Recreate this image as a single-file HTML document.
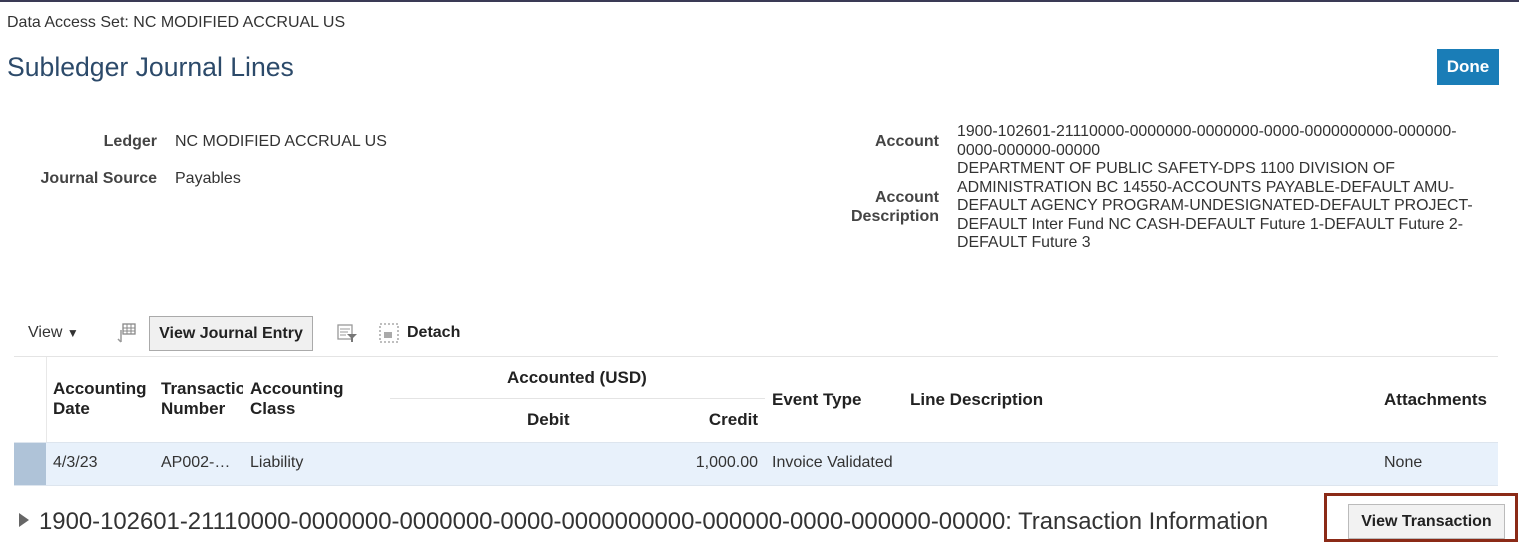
<!DOCTYPE html>
<html><head><style>
*{margin:0;padding:0;box-sizing:border-box}
body{width:1519px;height:554px;position:relative;background:#fff;font-family:"Liberation Sans",sans-serif;color:#333;overflow:hidden}
.a{position:absolute;white-space:nowrap}
.b{font-weight:bold}
.lab{font-size:16px;font-weight:bold;color:#444;text-align:right}
.v{font-size:16px;color:#333}
.h{font-size:17px;color:#222;font-weight:bold}
</style></head><body>
<div class="a" style="left:0;top:0;width:1519px;height:2px;background:#3a3a55"></div>
<div class="a" style="left:7px;top:14px;font-size:16px;color:#333">Data Access Set: NC MODIFIED ACCRUAL US</div>
<div class="a" style="left:7px;top:52px;font-size:26.6px;color:#2c4a6a">Subledger Journal Lines</div>
<div class="a b" style="left:1437px;top:49px;width:62px;height:36px;background:#1a7db7;color:#fff;font-size:17px;line-height:36px;text-align:center">Done</div>

<div class="a lab" style="right:1362px;top:133px">Ledger</div>
<div class="a v" style="left:175px;top:133px">NC MODIFIED ACCRUAL US</div>
<div class="a lab" style="right:1362px;top:170px">Journal Source</div>
<div class="a v" style="left:175px;top:170px">Payables</div>

<div class="a lab" style="right:580px;top:133px">Account</div>
<div class="a lab" style="right:580px;top:188px;line-height:19px">Account<br>Description</div>
<div class="a v" style="left:957px;top:123px;line-height:18.5px;font-size:15.9px">1900-102601-21110000-0000000-0000000-0000-0000000000-000000-<br>0000-000000-00000<br>DEPARTMENT OF PUBLIC SAFETY-DPS 1100 DIVISION OF<br>ADMINISTRATION BC 14550-ACCOUNTS PAYABLE-DEFAULT AMU-<br>DEFAULT AGENCY PROGRAM-UNDESIGNATED-DEFAULT PROJECT-<br>DEFAULT Inter Fund NC CASH-DEFAULT Future 1-DEFAULT Future 2-<br>DEFAULT Future 3</div>

<div class="a v" style="left:28px;top:324px;font-size:16px">View <span style="font-size:12px">▼</span></div>
<svg class="a" style="left:115px;top:322px" width="22" height="22" viewBox="0 0 22 22"><rect x="8" y="2" width="12" height="10" fill="none" stroke="#888" stroke-width="1.3"/><path d="M8 6h12M8 9h12M12 2v10M16 2v10" stroke="#888" stroke-width="1"/><path d="M6 8v12M6 20l-3-3" stroke="#999" stroke-width="1.5" fill="none"/></svg>
<div class="a b" style="left:149px;top:316px;width:164px;height:35px;border:1px solid #aaa;background:#f0f0f0;font-size:16px;line-height:33px;text-align:center;color:#222">View Journal Entry</div>
<svg class="a" style="left:336px;top:322px" width="22" height="22" viewBox="0 0 22 22"><rect x="2" y="3" width="14" height="14" fill="none" stroke="#999" stroke-width="1.3"/><path d="M4 7h10M4 10h8M4 13h6" stroke="#999"/><path d="M11 12h10l-4 4v4h-2v-4z" fill="#777"/></svg>
<svg class="a" style="left:378px;top:322px" width="22" height="22" viewBox="0 0 22 22"><rect x="2" y="2" width="18" height="18" fill="none" stroke="#999" stroke-width="1.3" stroke-dasharray="2 2"/><rect x="6" y="10" width="8" height="6" fill="#aaa"/></svg>
<div class="a b" style="left:407px;top:324px;font-size:16px;color:#222">Detach</div>

<div class="a" style="left:14px;top:356px;width:1484px;height:1px;background:#e4e4e4"></div>
<div class="a" style="left:46px;top:357px;width:1px;height:85px;background:#e8e8e8"></div>
<div class="a" style="left:14px;top:442px;width:1484px;height:44px;background:#e8f1fb;border-top:1px solid #dde5ee;border-bottom:1px solid #dde5ee"></div>
<div class="a" style="left:14px;top:443px;width:32px;height:42px;background:#afc3d8"></div>
<div class="a" style="left:390px;top:398px;width:375px;height:1px;background:#e4e4e4"></div>

<div class="a h" style="left:53px;top:379px;line-height:20px">Accounting<br>Date</div>
<div class="a h" style="left:161px;top:379px;line-height:20px;width:82px;overflow:hidden">Transaction<br>Number</div>
<div class="a h" style="left:250px;top:379px;line-height:20px">Accounting<br>Class</div>
<div class="a h" style="left:507px;top:368px">Accounted (USD)</div>
<div class="a h" style="left:527px;top:410px">Debit</div>
<div class="a h" style="right:761px;top:410px">Credit</div>
<div class="a h" style="left:772px;top:390px">Event Type</div>
<div class="a h" style="left:910px;top:390px">Line Description</div>
<div class="a h" style="left:1384px;top:390px">Attachments</div>

<div class="a v" style="left:53px;top:454px">4/3/23</div>
<div class="a v" style="left:161px;top:454px">AP002-…</div>
<div class="a v" style="left:250px;top:454px">Liability</div>
<div class="a v" style="right:761px;top:454px">1,000.00</div>
<div class="a v" style="left:772px;top:454px">Invoice Validated</div>
<div class="a v" style="left:1384px;top:454px">None</div>

<div class="a" style="left:19px;top:513px;width:0;height:0;border-left:10px solid #666;border-top:7px solid transparent;border-bottom:7px solid transparent"></div>
<div class="a" style="left:39px;top:508px;font-size:23.9px;color:#333">1900-102601-21110000-0000000-0000000-0000-0000000000-000000-0000-000000-00000: Transaction Information</div>
<div class="a b" style="left:1348px;top:504px;width:157px;height:35px;border:1px solid #bbb;background:#f2f2f2;font-size:16px;line-height:33px;text-align:center;color:#222">View Transaction</div>
<div class="a" style="left:1324px;top:493px;width:194px;height:49px;border:3px solid #8b2a17"></div>
</body></html>
